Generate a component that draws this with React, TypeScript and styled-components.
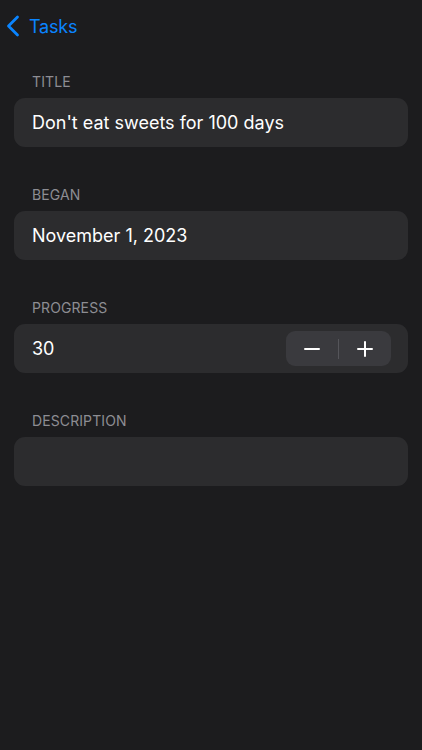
import styled, { createGlobalStyle } from 'styled-components';

const GlobalStyle = createGlobalStyle`
  html, body {
    margin: 0;
    padding: 0;
    background: #1c1c1e;
  }
  body {
    font-family: Inter, "Noto Sans", "Liberation Sans", sans-serif;
    -webkit-font-smoothing: antialiased;
  }
`;

const Screen = styled.div`
  width: 422px;
  height: 750px;
  background: #1c1c1e;
  box-sizing: border-box;
`;

const NavBar = styled.div`
  height: 52px;
  display: flex;
  align-items: center;
  padding-left: 6px;
  gap: 9px;
  color: #0a84ff;
`;

const BackLabel = styled.span`
  font-size: 18px;
  letter-spacing: -0.2px;
`;

const Form = styled.div`
  padding: 21px 14px 0;
  display: flex;
  flex-direction: column;
  gap: 39px;
`;

const Section = styled.div`
  display: flex;
  flex-direction: column;
  gap: 8px;
`;

const Label = styled.div`
  padding-left: 18px;
  font-size: 14px;
  line-height: 17px;
  color: #8d8d93;
  letter-spacing: 0.1px;
`;

const Card = styled.div`
  height: 49px;
  border-radius: 11px;
  background: #2c2c2e;
  display: flex;
  align-items: center;
  justify-content: space-between;
  padding: 0 18px;
  box-sizing: border-box;
  color: #ffffff;
  font-size: 18px;
`;

const Stepper = styled.div`
  display: flex;
  align-items: center;
  width: 105px;
  height: 35px;
  margin-right: -1px;
  border-radius: 9px;
  background: #3a3a3e;
`;

const StepButton = styled.div`
  flex: 1;
  height: 100%;
  display: flex;
  align-items: center;
  justify-content: center;
`;

const Divider = styled.div`
  width: 1px;
  height: 20px;
  background: #55555a;
`;

const Chevron = () => (
  <svg width="14" height="22" viewBox="0 0 14 22">
    <path d="M11.5 2 L2.5 11 L11.5 20" fill="none" stroke="#0a84ff" strokeWidth="2.8" strokeLinecap="round" strokeLinejoin="round" />
  </svg>
);

const Minus = () => (
  <svg width="16" height="16" viewBox="0 0 16 16">
    <path d="M1 8 H15" stroke="#fff" strokeWidth="2" strokeLinecap="round" />
  </svg>
);

const Plus = () => (
  <svg width="16" height="16" viewBox="0 0 16 16">
    <path d="M1 8 H15 M8 1 V15" stroke="#fff" strokeWidth="2" strokeLinecap="round" />
  </svg>
);

export default function App() {
  return (
    <Screen>
      <GlobalStyle />
      <NavBar>
        <Chevron />
        <BackLabel>Tasks</BackLabel>
      </NavBar>
      <Form>
        <Section>
          <Label>TITLE</Label>
          <Card>Don't eat sweets for 100 days</Card>
        </Section>
        <Section>
          <Label>BEGAN</Label>
          <Card>November 1, 2023</Card>
        </Section>
        <Section>
          <Label>PROGRESS</Label>
          <Card>
            30
            <Stepper>
              <StepButton>
                <Minus />
              </StepButton>
              <Divider />
              <StepButton>
                <Plus />
              </StepButton>
            </Stepper>
          </Card>
        </Section>
        <Section>
          <Label>DESCRIPTION</Label>
          <Card />
        </Section>
      </Form>
    </Screen>
  );
}
